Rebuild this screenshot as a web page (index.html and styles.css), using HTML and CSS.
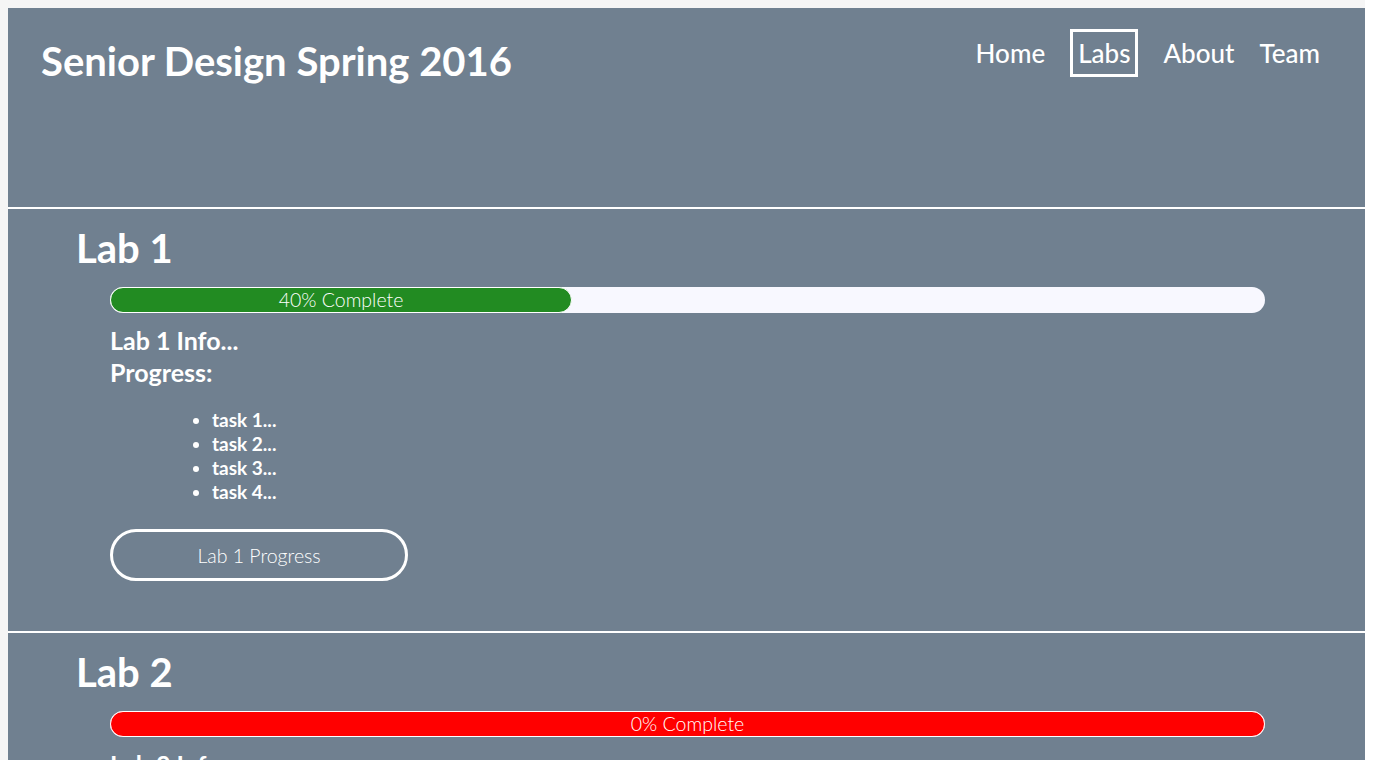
FILE: index.html
```html
<!DOCTYPE html>
<html lang="en">
<head>
<meta charset="utf-8">
<title>Senior Design Spring 2016</title>
<link rel="stylesheet" href="styles.css">
</head>
<body>
<div class="page">
  <header class="site-header">
    <h1 class="site-title">Senior Design Spring 2016</h1>
    <nav class="nav">
      <a class="nav-link" href="#">Home</a>
      <a class="nav-link active" href="#">Labs</a>
      <a class="nav-link" href="#">About</a>
      <a class="nav-link" href="#">Team</a>
    </nav>
  </header>

  <section class="lab">
    <h2 class="lab-title">Lab 1</h2>
    <div class="lab-body">
      <div class="progress">
        <div class="progress-fill fill-green" style="width:40%">40% Complete</div>
      </div>
      <p class="lab-info">Lab 1 Info...<br>Progress:</p>
      <ul class="tasks">
        <li>task 1...</li>
        <li>task 2...</li>
        <li>task 3...</li>
        <li>task 4...</li>
      </ul>
      <a class="lab-btn" href="#">Lab 1 Progress</a>
    </div>
  </section>

  <section class="lab">
    <h2 class="lab-title">Lab 2</h2>
    <div class="lab-body">
      <div class="progress">
        <div class="progress-fill fill-red" style="width:100%">0% Complete</div>
      </div>
      <p class="lab-info">Lab 2 Info...<br>Progress:</p>
      <ul class="tasks">
        <li>task 1...</li>
        <li>task 2...</li>
        <li>task 3...</li>
        <li>task 4...</li>
      </ul>
      <a class="lab-btn" href="#">Lab 2 Progress</a>
    </div>
  </section>
</div>
</body>
</html>
```

FILE: styles.css
```css
html {
  background: #ffffff;
  overflow: hidden;
}

body {
  margin: 0 12px 0 0;
  padding: 8px 0 0 8px;
  background: #f5f5f5;
  font-family: Lato, "Open Sans", "Liberation Sans", sans-serif;
  color: #ffffff;
}

.page {
  display: flex;
  flex-direction: column;
}

.site-header {
  box-sizing: border-box;
  height: 201px;
  background: #708090;
  border-bottom: 2px solid #ffffff;
  display: flex;
  justify-content: space-between;
  align-items: flex-start;
  padding: 21px 45px 0 33px;
}

.site-title {
  margin: 8px 0 0;
  font-size: 40px;
  font-weight: 700;
  line-height: 48px;
}

.nav {
  display: flex;
  align-items: center;
  gap: 25px;
}

.nav-link {
  color: #ffffff;
  text-decoration: none;
  font-size: 26px;
  font-weight: 500;
  line-height: 31px;
}

.nav-link.active {
  border: 3px solid #ffffff;
  padding: 6px 5px 5px;
}

.lab {
  background: #708090;
  border-bottom: 2px solid #ffffff;
  padding: 15px 100px 50px 68px;
}

.lab-title {
  margin: 0 0 15px;
  font-size: 40px;
  font-weight: 700;
  line-height: 48px;
}

.lab-body {
  margin-left: 34px;
  display: flex;
  flex-direction: column;
  align-items: flex-start;
}

.progress {
  align-self: stretch;
  height: 26px;
  background: #f8f8ff;
  border-radius: 13px;
  display: flex;
}

.progress-fill {
  box-sizing: border-box;
  height: 26px;
  border: 1px solid #ffffff;
  border-radius: 13px;
  font-size: 19.5px;
  font-weight: 300;
  line-height: 24px;
  text-align: center;
  color: #ffffff;
}

.fill-green {
  background: #228b22;
}

.fill-red {
  background: #ff0000;
}

.lab-info {
  margin: 11px 0 0;
  font-size: 25px;
  font-weight: 700;
  line-height: 32px;
}

.tasks {
  margin: 20px 0 0;
  padding-left: 102px;
  font-size: 19px;
  font-weight: 700;
  line-height: 24px;
}

.lab-btn {
  box-sizing: border-box;
  margin-top: 25px;
  width: 298px;
  height: 52px;
  border: 3px solid #ffffff;
  border-radius: 26px;
  display: flex;
  align-items: center;
  justify-content: center;
  color: #ffffff;
  text-decoration: none;
  font-size: 19.5px;
  font-weight: 300;
}
```
